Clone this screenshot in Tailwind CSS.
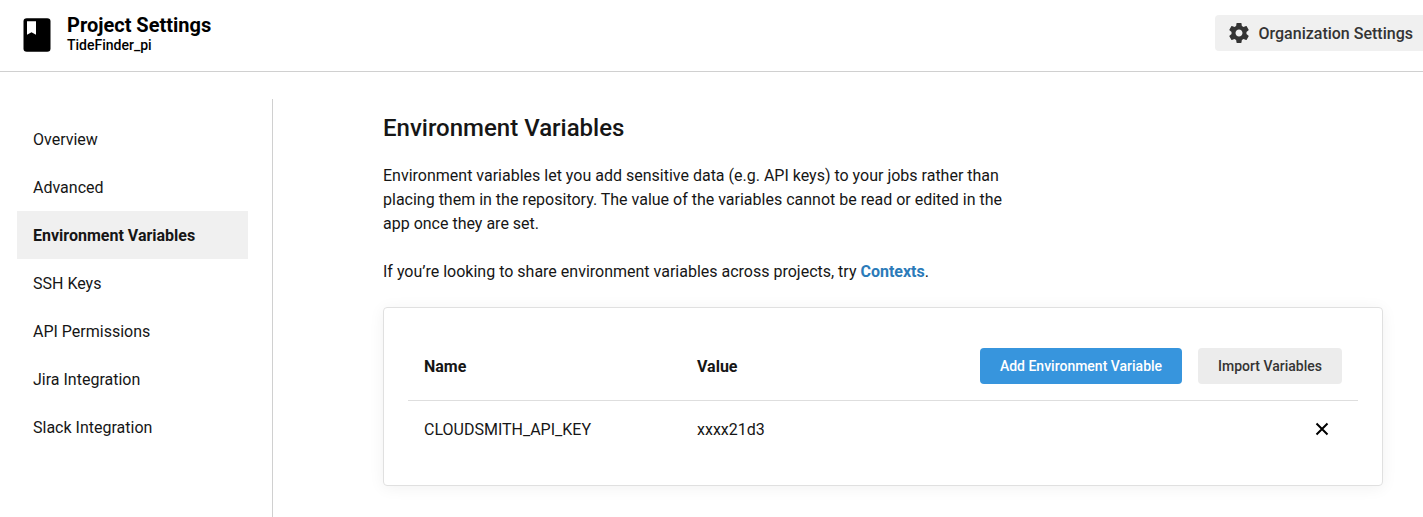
<!DOCTYPE html>
<html lang="en">
<head>
<meta charset="utf-8">
<title>Project Settings</title>
<script src="https://cdn.jsdelivr.net/npm/@tailwindcss/browser@4"></script>
</head>
<body class="h-[517px] overflow-hidden bg-white font-[Roboto,sans-serif] text-base text-[#161616]">
<header class="flex h-[72px] items-start justify-between border-b border-[#d0d0d0]">
  <div class="flex pl-[23px] pt-[13px]">
    <svg class="mt-[5px] h-[34px] w-7" viewBox="0 0 28 34"><rect x=".5" y=".3" width="27" height="33.400" rx="3.300" fill="#000"/><path d="M4 3.300h9v13.400l-4.500-2.500L4 16.700z" fill="#fff"/></svg>
    <div class="pl-4">
      <h1 class="text-xl leading-6 font-bold text-black">Project Settings</h1>
      <p class="text-sm leading-4 font-medium text-black">TideFinder_pi</p>
    </div>
  </div>
  <button class="mt-[15px] flex h-9 w-52 items-center gap-[7.500px] rounded-l bg-[#f0f0f0] pl-3 font-medium text-[#343434]">
    <svg class="h-6 w-6 shrink-0" viewBox="0 0 24 24" fill="#343434"><path d="M19.430 12.980c.04-.32.070-.64.070-.98s-.03-.66-.07-.98l2.110-1.650c.19-.15.240-.42.120-.64l-2-3.460c-.12-.22-.39-.3-.61-.22l-2.490 1c-.52-.4-1.080-.73-1.690-.98l-.38-2.650C14.460 2.180 14.250 2 14 2h-4c-.25 0-.46.180-.49.420l-.38 2.650c-.61.250-1.170.590-1.690.98l-2.490-1c-.23-.09-.49 0-.61.220l-2 3.460c-.13.220-.07.490.12.640l2.110 1.650c-.04.320-.07.650-.07.980s.03.660.07.980l-2.110 1.650c-.19.150-.24.420-.12.640l2 3.460c.12.220.39.300.61.220l2.490-1c.52.400 1.080.730 1.690.980l.38 2.650c.03.240.24.420.49.420h4c.25 0 .46-.18.490-.42l.38-2.650c.61-.25 1.170-.59 1.690-.98l2.490 1c.23.090.49 0 .61-.22l2-3.460c.12-.22.070-.49-.12-.64l-2.110-1.650zM12 15.500c-1.930 0-3.500-1.570-3.500-3.500s1.570-3.500 3.500-3.500 3.500 1.570 3.500 3.500-1.570 3.500-3.500 3.500z"/></svg>
    <span class="pt-0.5 whitespace-nowrap">Organization Settings</span>
  </button>
</header>
<div class="flex pt-[27px]">
  <nav class="flex h-[418px] w-[273px] shrink-0 flex-col border-r border-[#d0d0d0] pt-4 pr-6 pl-[17px] *:flex *:h-12 *:items-center *:pt-0.5 *:pl-4">
    <a>Overview</a>
    <a>Advanced</a>
    <a class="bg-[#f0f0f0] font-bold">Environment Variables</a>
    <a>SSH Keys</a>
    <a>API Permissions</a>
    <a>Jira Integration</a>
    <a>Slack Integration</a>
  </nav>
  <main class="ml-[110px] w-[1000px] pt-[13px]">
    <h2 class="text-2xl leading-8 font-medium">Environment Variables</h2>
    <p class="mt-5 w-[640px] leading-6">Environment variables let you add sensitive data (e.g. API keys) to your jobs rather than<br>placing them in the repository. The value of the variables cannot be read or edited in the<br>app once they are set.</p>
    <p class="mt-6 leading-6">If you’re looking to share environment variables across projects, try <a class="font-bold text-[#2b7bb9]">Contexts</a>.</p>
    <section class="mt-[23px] h-[179px] rounded border border-[#e0e0e0] px-6 pt-10 shadow-[0_2px_16px_rgba(0,0,0,0.06)]">
      <div class="flex h-[53px] border-b border-[#dedede] px-4">
        <div class="w-[273px] pt-[7px] leading-6 font-bold">Name</div>
        <div class="pt-[7px] leading-6 font-bold">Value</div>
        <div class="ml-auto flex gap-4">
          <button class="h-9 w-[202px] rounded bg-[#3795dd] text-sm font-medium text-white">Add Environment Variable</button>
          <button class="h-9 w-36 rounded bg-[#ececec] text-sm font-medium text-[#343434]">Import Variables</button>
        </div>
      </div>
      <div class="flex h-14 items-center px-4">
        <div class="w-[273px] pt-0.5">CLOUDSMITH_API_KEY</div>
        <div class="pt-0.5">xxxx21d3</div>
        <svg class="mr-[13px] ml-auto h-[14px] w-[14px]" viewBox="0 0 14 14" fill="none" stroke="#000" stroke-width="2"><path d="M1.500 1.500l11 11M12.500 1.500l-11 11"/></svg>
      </div>
    </section>
  </main>
</div>
</body>
</html>
